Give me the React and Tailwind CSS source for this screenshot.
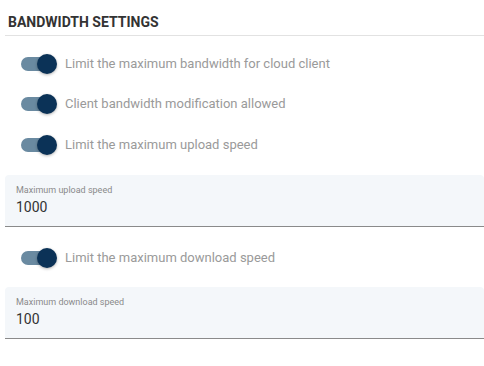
const Toggle = ({ label }) => (
  <div className="flex items-center h-[20px]">
    <div className="relative w-[36px] h-[20px] ml-[21px] shrink-0">
      <div className="absolute left-0 top-[3px] w-[32px] h-[14px] rounded-full bg-[#6a8aa1]" />
      <div className="absolute right-0 top-0 w-[20px] h-[20px] rounded-full bg-[#0b3257] shadow-[0_1px_3px_rgba(0,0,0,0.3)]" />
    </div>
    <span className="ml-[8px] text-[13px] text-[#9a9a9a]">{label}</span>
  </div>
);

const Field = ({ label, value }) => (
  <div className="ml-[5px] h-[52px] bg-[#f4f7fa] rounded-t-[4px] border-b border-[#8a8a8a] pl-[11px] pt-[9px]">
    <div className="text-[9px] leading-[12px] text-[#8a8a8a]">{label}</div>
    <div className="text-[14px] leading-[20px] text-[#333] mt-[1px]">{value}</div>
  </div>
);

export default function App() {
  return (
    <div className="w-[484px] h-[366px] bg-white overflow-hidden font-['Roboto',sans-serif]">
      <div className="pt-[14px] pl-[8px] h-[35px] text-[14px] font-bold text-[#333] leading-[16px]">
        BANDWIDTH SETTINGS
      </div>
      <div className="ml-[5px] h-px bg-[#e2e2e2]" />
      <div className="mt-[18px]">
        <Toggle label="Limit the maximum bandwidth for cloud client" />
      </div>
      <div className="mt-[20px]">
        <Toggle label="Client bandwidth modification allowed" />
      </div>
      <div className="mt-[21px]">
        <Toggle label="Limit the maximum upload speed" />
      </div>
      <div className="mt-[20px]">
        <Field label="Maximum upload speed" value="1000" />
      </div>
      <div className="mt-[21px]">
        <Toggle label="Limit the maximum download speed" />
      </div>
      <div className="mt-[19px]">
        <Field label="Maximum download speed" value="100" />
      </div>
    </div>
  );
}
